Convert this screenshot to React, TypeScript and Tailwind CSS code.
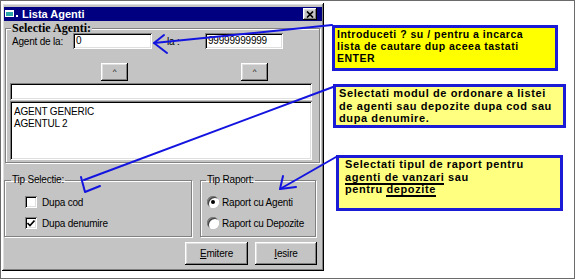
import { FC, ReactNode } from 'react';

const raised =
  'bg-[#c4c4c4] shadow-[inset_-1px_-1px_#000,inset_1px_1px_#fff,inset_-2px_-2px_#808080,inset_2px_2px_#dfdfdf]';
const sunken =
  'bg-white shadow-[inset_1px_1px_#808080,inset_-1px_-1px_#fff,inset_2px_2px_#000,inset_-2px_-2px_#dfdfdf]';
const etched = 'border border-[#808080] shadow-[1px_1px_0_#fff,inset_1px_1px_0_#fff]';

const Checkbox: FC<{ checked?: boolean; label: string }> = ({ checked, label }) => (
  <div className="flex items-center h-[12px] whitespace-nowrap">
    <span className={`w-[12px] h-[12px] flex items-center justify-center ${sunken}`}>
      {checked && (
        <svg width="8" height="7" viewBox="0 0 8 7">
          <path d="M0.5 3 L3 5.5 L7.5 0.5" stroke="#000" strokeWidth="1.6" fill="none" />
        </svg>
      )}
    </span>
    <span className="ml-[5px]">{label}</span>
  </div>
);

const Radio: FC<{ checked?: boolean; label: string }> = ({ checked, label }) => (
  <div className="flex items-center h-[12px] whitespace-nowrap">
    <span className="w-[12px] h-[12px] rounded-full bg-white shadow-[inset_1px_1px_#808080,inset_-1px_-1px_#fff,inset_2px_2px_#404040] flex items-center justify-center">
      {checked && <span className="w-[4px] h-[4px] rounded-full bg-black" />}
    </span>
    <span className="ml-[3px]">{label}</span>
  </div>
);

const Note: FC<{ className: string; children: ReactNode }> = ({ className, children }) => (
  <div
    className={`border-[3px] border-[#1c1cd6] text-black font-bold whitespace-nowrap ${className}`}
    style={{ fontFamily: '"Liberation Sans", Arial, sans-serif' }}
  >
    {children}
  </div>
);

export default function App() {
  return (
    <div className="w-[576px] h-[280px] bg-white relative" style={{ fontFamily: '"Liberation Sans", Arial, sans-serif' }}>
      <div className="w-[575px] h-[279px] border border-[#6b6b6b] flex items-start">
        {/* fereastra */}
        <div className={`ml-[1px] mt-[2px] w-[322px] h-[268px] px-[2px] pt-[4px] flex flex-col text-[10px] tracking-[-0.2px] text-black ${raised}`}>
          <div className="h-[14px] bg-[#000080] flex items-center pl-[1px] pr-[5px] tracking-normal">
            <svg width="16" height="8" viewBox="0 0 16 8">
              <rect x="0" y="0" width="9" height="7" fill="#fff" />
              <rect x="1" y="2" width="7" height="4" fill="#2aa6a6" />
              <rect x="11" y="5" width="2" height="2" fill="#fff" />
            </svg>
            <span className="ml-[1px] text-white font-bold text-[11px] leading-none">Lista Agenti</span>
            <span className={`ml-auto w-[14px] h-[12px] flex items-center justify-center ${raised}`}>
              <svg width="8" height="7" viewBox="0 0 8 7">
                <path d="M1 0.5 L7 6.5 M7 0.5 L1 6.5" stroke="#000" strokeWidth="1.7" />
              </svg>
            </span>
          </div>

          {/* Selectie Agenti */}
          <fieldset className={`ml-[1px] mt-[1px] w-[315px] pb-[2px] ${etched}`}>
            <legend
              className="ml-[5px] px-[1px] font-bold text-[12px] leading-[12px] tracking-normal bg-[#c4c4c4]"
              style={{ fontFamily: '"Liberation Serif", "Times New Roman", serif' }}
            >
              Selectie Agenti:
            </legend>
            <div className="flex items-center h-[16px] -mt-[1px] pl-[6px]">
              <span className="w-[61px]">Agent de la:</span>
              <div className={`w-[79px] h-[16px] pl-[3px] leading-[16px] ${sunken}`}>0</div>
              <span className="ml-[15px] w-[38px]">la :</span>
              <div className={`w-[78px] h-[16px] pl-[3px] leading-[16px] ${sunken}`}>99999999999</div>
            </div>
            <div className="flex mt-[14px] pl-[6px]">
              <div className={`ml-[89px] w-[27px] h-[18px] flex items-center justify-center text-[8px] ${raised}`}>^</div>
              <div className={`ml-[113px] w-[27px] h-[18px] flex items-center justify-center text-[8px] ${raised}`}>^</div>
            </div>
            <div className={`ml-[4px] mt-[2px] w-[302px] h-[17px] ${sunken}`} />
            <div className={`ml-[4px] mt-[1px] w-[302px] h-[59px] pt-[5px] pl-[4px] leading-[11.5px] ${sunken}`}>
              <div>AGENT GENERIC</div>
              <div>AGENTUL 2</div>
            </div>
          </fieldset>

          <div className="flex mt-[11px]">
            <fieldset className={`w-[188px] h-[63px] ${etched}`}>
              <legend className="ml-[6px] px-[1px] leading-[12px]">Tip Selectie:</legend>
              <div className="flex flex-col gap-[9px] mt-[10px] ml-[20px]">
                <Checkbox label="Dupa cod" />
                <Checkbox checked label="Dupa denumire" />
              </div>
            </fieldset>
            <fieldset className={`ml-[8px] w-[116px] h-[63px] ${etched}`}>
              <legend className="ml-[5px] px-[1px] leading-[12px]">Tip Raport:</legend>
              <div className="flex flex-col gap-[9px] mt-[10px] ml-[6px]">
                <Radio checked label="Raport cu Agenti" />
                <Radio label="Raport cu Depozite" />
              </div>
            </fieldset>
          </div>

          <div className="flex mt-[5px]">
            <div className={`ml-[181px] w-[63px] h-[23px] flex items-center justify-center ${raised}`}>
              <span><span className="underline">E</span>mitere</span>
            </div>
            <div className={`ml-[7px] w-[62px] h-[23px] flex items-center justify-center ${raised}`}>
              <span><span className="underline">I</span>esire</span>
            </div>
          </div>
        </div>

        {/* explicatii */}
        <div className="flex flex-col items-start">
          <Note className="ml-[8px] mt-[24px] w-[226px] h-[46px] bg-[#ffff00] pl-[2px] text-[10.5px] leading-[12.2px] tracking-[0.5px]">
            <div>Introduceti ? su / pentru a incarca</div>
            <div>lista de cautare dup aceea tastati</div>
            <div>ENTER</div>
          </Note>
          <Note className="ml-[9px] mt-[13px] w-[233px] h-[44px] bg-[#ffff80] pl-[3px] text-[11px] leading-[12.7px] tracking-[0.6px]">
            <div>Selectati modul de ordonare a listei</div>
            <div>de agenti sau depozite dupa cod sau</div>
            <div>dupa denumire.</div>
          </Note>
          <Note className="ml-[12px] mt-[27px] w-[227px] h-[56px] bg-[#ffff80] pl-[6px] text-[11px] leading-[12.7px] tracking-[0.6px]">
            <div>Selectati tipul de raport pentru</div>
            <div>
              <span className="border-b-2 border-black">agenti de vanzari</span> sau
            </div>
            <div>
              pentru <span className="border-b-2 border-black">depozite</span>
            </div>
          </Note>
        </div>
      </div>

      {/* sageti */}
      <svg className="absolute inset-0 pointer-events-none" width="576" height="280" viewBox="0 0 576 280">
        <g stroke="#1414e0" strokeWidth="2" fill="none" strokeLinecap="round" strokeLinejoin="round">
          <path d="M332 25 L154 43" />
          <path d="M164 35 L154 43 L167 53" />
          <path d="M333 87 L84 180" />
          <path d="M81 177 L85 192 L100 186" />
          <path d="M336 157 L280 189" />
          <path d="M283 176 L280 189 L296 187" />
        </g>
      </svg>
    </div>
  );
}
